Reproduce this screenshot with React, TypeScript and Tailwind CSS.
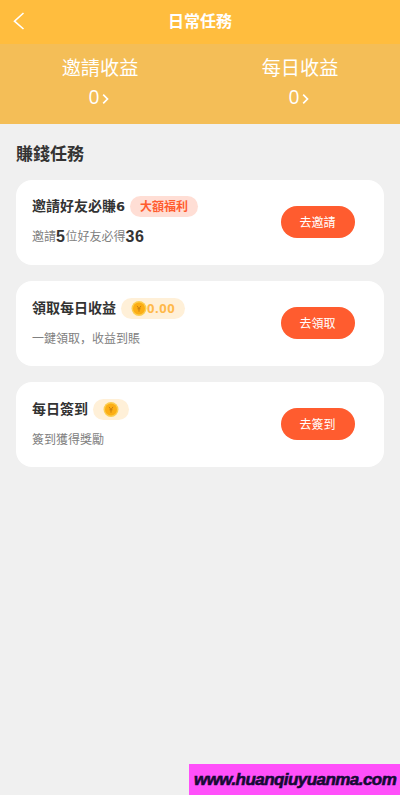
import React from 'react';

const Coin = () => (
  <svg viewBox="0 0 16 16" className="h-4 w-4 shrink-0">
    <circle cx="8" cy="7.5" r="7.5" fill="#fbcd50" />
    <circle cx="8" cy="7.5" r="6" fill="#fcae14" />
    <path d="M6 4.9 8 7.5l2-2.6M8 7.5v3.2M6.5 7.8h3" stroke="#c97f10" strokeWidth="1" fill="none" />
  </svg>
);

const Stat = ({ label }: { label: string }) => (
  <div className="flex flex-1 flex-col items-center text-white">
    <div className="h-[29px] text-[19.2px] leading-[32px]">{label}</div>
    <div className="flex h-[29px] items-center">
      <span className="font-['Open_Sans'] text-[19.2px] leading-[29px]">0</span>
      <svg viewBox="0 0 10 12" className="mt-1 ml-[2px] h-3 w-[10px]">
        <path d="M2.2 1.7 6.5 6 2.2 10.3" stroke="#fff" strokeWidth="1.7" fill="none" />
      </svg>
    </div>
  </div>
);

type TaskProps = { title: React.ReactNode; badge: React.ReactNode; desc: React.ReactNode; action: string };

const Task = ({ title, badge, desc, action }: TaskProps) => (
  <section className="flex h-[85px] justify-between rounded-2xl bg-white pr-[29px] pl-4">
    <div className="flex flex-col pt-[17px]">
      <div className="flex h-[21px] items-center">
        <h3 className="flex h-[21px] items-center text-[14px] leading-[21px] font-bold whitespace-nowrap text-[#333]">{title}</h3>
        {badge}
      </div>
      <p className="mt-[7px] flex h-6 items-center text-[12px] leading-[26px] whitespace-nowrap text-[#808080]">{desc}</p>
    </div>
    <button className="mt-[26px] h-8 w-[74px] rounded-full bg-[#ff5c2f] pt-[2px] pr-px text-[12px] leading-[30px] text-white">{action}</button>
  </section>
);

export default function App() {
  return (
    <div className="flex h-[795px] w-[400px] flex-col bg-[#f0f0f0] font-['Liberation_Sans','Noto_Sans_CJK_SC',sans-serif]">
      <header className="grid h-11 grid-cols-[44px_1fr_44px] items-center bg-[#ffbd3e] text-white">
        <svg viewBox="0 0 12 20" className="ml-[13px] h-5 w-3 -translate-y-px">
          <path d="M10.5 2 1.5 10.2 10.5 18" stroke="#fff" strokeWidth="1.6" fill="none" />
        </svg>
        <h1 className="text-center text-[16px] leading-[42px] font-bold">日常任務</h1>
      </header>
      <div className="flex h-20 bg-[#f4be57] pt-[9px]">
        <Stat label="邀請收益" />
        <Stat label="每日收益" />
      </div>
      <main className="flex flex-1 flex-col px-4">
        <h2 className="h-14 text-[17px] leading-[61px] font-bold text-[#333]">賺錢任務</h2>
        <div className="flex flex-col gap-4">
          <Task
            title={<><span className="pb-[3px] leading-[20px]">邀請好友必賺</span><span className="w-[9px] pb-[3px] font-['DejaVu_Sans'] text-[13px] leading-[19px]">6</span></>}
            badge={<span className="mb-[2px] ml-[5px] h-[21px] rounded-full bg-[#ffded5] px-[10px] text-[12px] leading-[22px] font-bold text-[#ff5c2f]">大額福利</span>}
            desc={<>邀請<b className="text-[16px] leading-[22px] tracking-[0.5px] text-[#333]">5</b>位好友必得<b className="text-[16px] leading-[22px] tracking-[0.6px] text-[#333]">36</b></>}
            action="去邀請"
          />
          <Task
            title="領取每日收益"
            badge={
              <span className="ml-[5px] flex h-[21px] w-16 items-center rounded-full bg-[#fff0d8] pl-[10px] font-['Open_Sans'] text-[13px] leading-[21px] font-bold tracking-[0.6px] text-[#ffb94a]">
                <Coin />0.00
              </span>
            }
            desc={<span className="pt-[2px]">一鍵領取，收益到賬</span>}
            action="去領取"
          />
          <Task
            title="每日簽到"
            badge={<span className="ml-[5px] flex h-[21px] w-9 items-center justify-center rounded-full bg-[#fff0d8]"><Coin /></span>}
            desc={<span className="pt-[2px]">簽到獲得獎勵</span>}
            action="去簽到"
          />
        </div>
      </main>
      <footer className="h-[31px] w-[211px] self-end bg-[#ff50fa] pl-[5px] text-[17px] leading-[31px] font-bold tracking-[-0.55px] whitespace-nowrap text-[#160a35] italic [-webkit-text-stroke:0.6px_#160a35]">
        www.huanqiuyuanma.com
      </footer>
    </div>
  );
}
